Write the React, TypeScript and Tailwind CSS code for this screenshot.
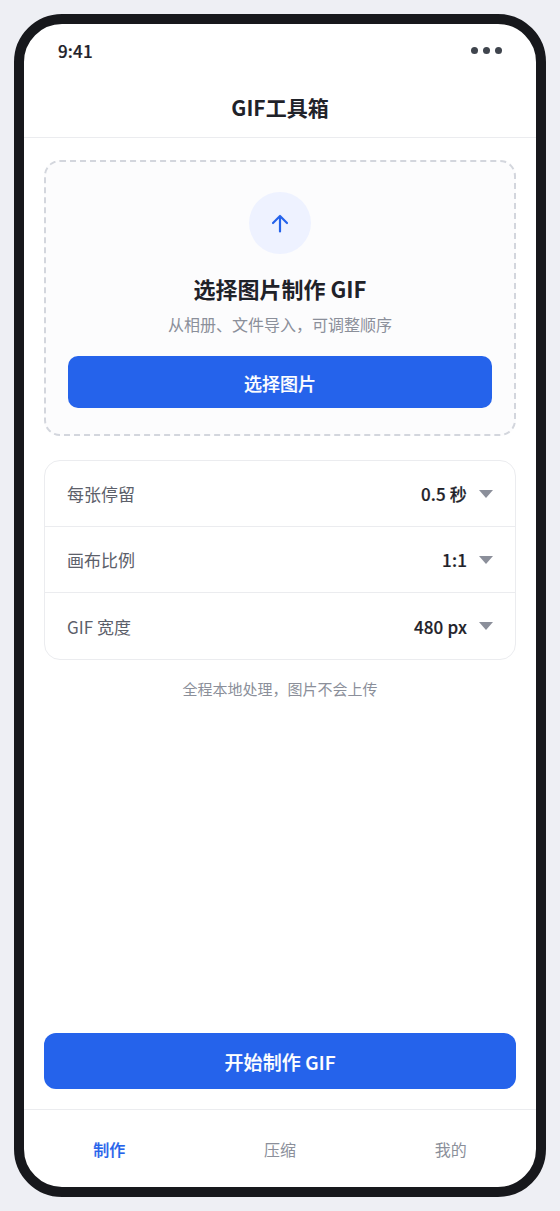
import clsx from "clsx";

type Setting = {
  label: string;
  value: string;
};

const settings: Setting[] = [
  { label: "每张停留", value: "0.5 秒" },
  { label: "画布比例", value: "1:1" },
  { label: "GIF 宽度", value: "480 px" },
];

const tabs = ["制作", "压缩", "我的"];

// the CJK family has no semibold cut, so thicken the medium one a little
const semibold = "font-medium [-webkit-text-stroke:0.2px_currentColor]";

function StatusBar() {
  return (
    <div className="flex h-[54px] items-center justify-between px-[34px]">
      <span className={clsx("text-[17px] leading-6 tracking-[0.15px]", semibold)}>
        9:41
      </span>
      <div className="flex gap-[5px] pb-px">
        <span className="size-[7px] rounded-full bg-[#3f444d]" />
        <span className="size-[7px] rounded-full bg-[#3f444d]" />
        <span className="size-[7px] rounded-full bg-[#3f444d]" />
      </div>
    </div>
  );
}

function UploadCard() {
  return (
    <section className="flex flex-col items-center rounded-2xl border-2 border-dashed border-[#d3d6dd] bg-[#fcfcfd] px-[22px] pt-[30px] pb-[26px]">
      <div className="flex size-[62px] items-center justify-center rounded-full bg-[#eef2ff]">
        <svg
          className="size-6 text-[#2563eb]"
          viewBox="0 0 24 24"
          fill="none"
          stroke="currentColor"
          strokeWidth="2.2"
          strokeLinecap="round"
          strokeLinejoin="round"
        >
          <path d="M12 20.5V5M5 12l7-7 7 7" />
        </svg>
      </div>
      <h2 className="mt-[18px] text-[22px] leading-8 font-bold">
        选择图片制作 GIF
      </h2>
      <p className="mt-2 text-base leading-6 text-[#8b8f9a]">
        从相册、文件导入，可调整顺序
      </p>
      <button
        className={clsx(
          "mt-5 h-[52px] w-full rounded-[10px] bg-[#2563eb] pt-0.5 text-lg text-white",
          semibold
        )}
      >
        选择图片
      </button>
    </section>
  );
}

function SettingRow({ label, value }: Setting) {
  return (
    <div className="group flex h-[66px] items-center justify-between border-b border-[#ebecef] px-[22px] text-[17px] last:border-b-0">
      <span className="text-[#5c606a] group-last:pt-px">{label}</span>
      <div className="flex items-center gap-3">
        <span className={clsx("tracking-[0.15px] group-last:pt-px", semibold)}>
          {value}
        </span>
        <svg className="h-2 w-[14px] text-[#8b8f9a]" viewBox="0 0 14 8">
          <path d="M0 0h14L7 8z" fill="currentColor" />
        </svg>
      </div>
    </div>
  );
}

function App() {
  return (
    <div className="h-[1211px] w-[560px] bg-[#eeeff4] p-[14px] font-['Noto_Sans_CJK_SC',sans-serif] text-[#1f2229]">
      <div className="flex h-[1183px] flex-col overflow-hidden rounded-[48px] border-[10px] border-[#17181c] bg-white">
        <StatusBar />
        <header className="flex h-[60px] items-center justify-center border-b border-[#ebecef] pb-px">
          <h1 className="text-[21px] leading-8 font-bold">GIF工具箱</h1>
        </header>

        <main className="flex flex-1 flex-col px-5 pt-[22px] pb-5">
          <UploadCard />
          <section className="mt-6 rounded-2xl border border-[#ebecef]">
            {settings.map((setting) => (
              <SettingRow key={setting.label} {...setting} />
            ))}
          </section>
          <p className="mt-[18px] text-center text-[15px] leading-[22px] text-[#8b8f9a]">
            全程本地处理，图片不会上传
          </p>
          <button
            className={clsx(
              "mt-auto h-14 rounded-xl bg-[#2563eb] pt-0.5 text-[19px] tracking-[0.1px] text-white",
              semibold
            )}
          >
            开始制作 GIF
          </button>
        </main>

        <nav className="grid h-[78px] grid-cols-3 border-t border-[#ebecef]">
          {tabs.map((tab, i) => (
            <button
              key={tab}
              className={clsx(
                "text-base",
                i === 0 ? "text-[#2563eb]" : "text-[#8b8f9a]",
                i === 0 && semibold
              )}
            >
              {tab}
            </button>
          ))}
        </nav>
      </div>
    </div>
  );
}

export default App;
